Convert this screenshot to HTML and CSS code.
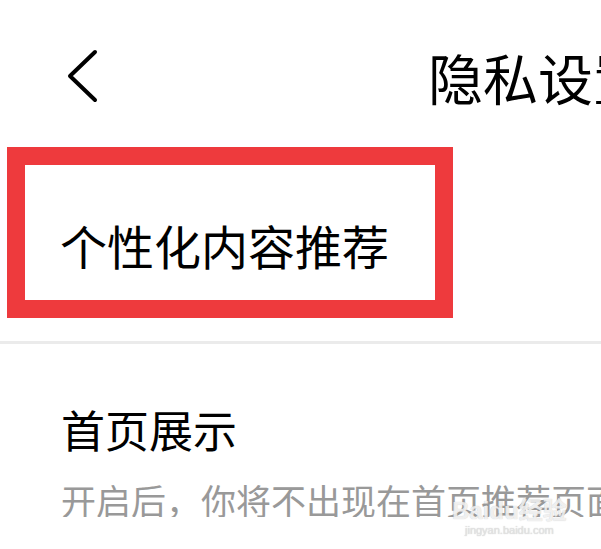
FILE: index.html
```html
<!DOCTYPE html>
<html lang="zh-CN">
<head>
    <meta charset="UTF-8">
    <meta name="viewport" content="width=device-width, initial-scale=1.0">
    <title>隐私设置</title>
    <link rel="stylesheet" href="styles.css">
</head>
<body>
    <div class="header">
        <svg class="back" width="36" height="56" viewBox="0 0 36 56">
            <path d="M31 4 L6 28 L31 52" fill="none" stroke="#000" stroke-width="4" stroke-linecap="round" stroke-linejoin="round"/>
        </svg>
        <h1 class="title">隐私设置</h1>
    </div>
    <div class="highlight">
        <div class="section-title">个性化内容推荐</div>
    </div>
    <div class="divider"></div>
    <div class="item">
        <div class="item-title">首页展示</div>
        <div class="item-desc">开启后，你将不出现在首页推荐页面</div>
    </div>
    <div class="watermark">
        <div class="wm-logo">Bai<span class="paw">du</span>经验</div>
        <div class="wm-url">jingyan.baidu.com</div>
    </div>
</body>
</html>
```
FILE: styles.css
```css
body {
    margin: 0;
    width: 601px;
    height: 549px;
    overflow: hidden;
    background: #ffffff;
    font-family: "Noto Sans CJK SC", "Noto Sans", sans-serif;
    color: #000;
    position: relative;
}
.header {
    display: flex;
    align-items: center;
    height: 147px;
    padding-top: 5px;
    box-sizing: border-box;
    overflow: hidden;
}
.back {
    margin-left: 64px;
    flex-shrink: 0;
}
.title {
    margin: 0 0 0 328px;
    font-size: 55px;
    font-weight: normal;
    line-height: 1;
    white-space: nowrap;
}
.highlight {
    margin-left: 7px;
    width: 446px;
    height: 171px;
    box-sizing: border-box;
    border: 18px solid #ee3a3d;
    padding: 56px 0 0 35px;
}
.section-title {
    font-size: 47px;
    line-height: 1;
    white-space: nowrap;
}
.divider {
    margin-top: 23px;
    height: 3px;
    background: #ebebeb;
}
.item {
    padding: 63px 0 0 61px;
    overflow: hidden;
}
.item-title {
    font-size: 44px;
    line-height: 1;
}
.item-desc {
    margin-top: 31px;
    font-size: 35px;
    line-height: 1;
    color: #999999;
    white-space: nowrap;
}
.watermark {
    position: absolute;
    left: 452px;
    top: 498px;
    color: rgba(255, 255, 255, 0.75);
    text-shadow: 0 0 1px rgba(150, 150, 150, 0.6);
    text-align: center;
}
.wm-logo {
    font-family: "Liberation Sans", "Noto Sans CJK SC", sans-serif;
    font-size: 24px;
    font-weight: bold;
    line-height: 26px;
}
.wm-url {
    font-family: "Liberation Sans", sans-serif;
    font-size: 11px;
    line-height: 12px;
    color: rgba(230, 230, 230, 0.9);
}
```
